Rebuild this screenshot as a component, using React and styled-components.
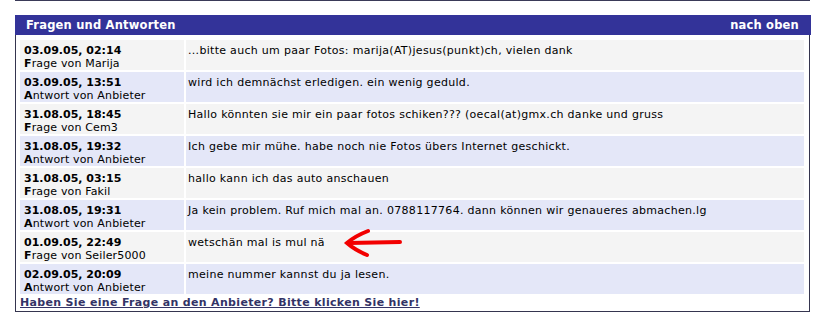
import React from "react";
import styled, { createGlobalStyle } from "styled-components";

const entries = [
  ["03.09.05, 02:14", "Frage von Marija", "...bitte auch um paar Fotos: marija(AT)jesus(punkt)ch, vielen dank"],
  ["03.09.05, 13:51", "Antwort von Anbieter", "wird ich demnächst erledigen. ein wenig geduld."],
  ["31.08.05, 18:45", "Frage von Cem3", "Hallo könnten sie mir ein paar fotos schiken??? (oecal(at)gmx.ch danke und gruss"],
  ["31.08.05, 19:32", "Antwort von Anbieter", "Ich gebe mir mühe. habe noch nie Fotos übers Internet geschickt."],
  ["31.08.05, 03:15", "Frage von Fakil", "hallo kann ich das auto anschauen"],
  ["31.08.05, 19:31", "Antwort von Anbieter", "Ja kein problem. Ruf mich mal an. 0788117764. dann können wir genaueres abmachen.lg"],
  ["01.09.05, 22:49", "Frage von Seiler5000", "wetschän mal is mul nä"],
  ["02.09.05, 20:09", "Antwort von Anbieter", "meine nummer kannst du ja lesen."],
];

const GlobalStyle = createGlobalStyle`
  body {
    margin: 0;
    background: #fff;
    font-family: "DejaVu Sans", Verdana, sans-serif;
    font-size: 11px;
    color: #000;
  }
`;

const Page = styled.div`
  position: relative;
  padding-left: 15px;
`;

const PrevEdge = styled.div`
  width: 795px;
  height: 1px;
  background: #3a3a58;
  margin-bottom: 14px;
`;

const Panel = styled.div`
  width: 796px;
`;

const Header = styled.div`
  height: 20px;
  background: #333399;
  color: #fff;
  font-weight: bold;
  font-size: 11.5px;
  letter-spacing: 0.2px;
  display: flex;
  align-items: center;
  justify-content: space-between;
  padding: 0 12px 0 11px;
`;

const Body = styled.div`
  width: 795px;
  box-sizing: border-box;
  border: 1px solid #35354f;
  border-top: none;
  padding: 5px 5px 1px 4px;
`;

const Grid = styled.div`
  display: grid;
  grid-template-columns: 164px 1fr;
  gap: 2px;
`;

const Cell = styled.div`
  height: 30px;
  box-sizing: border-box;
  padding: 4px 3px 0 ${(p) => (p.$msg ? "2px" : "4px")};
  line-height: 13px;
  letter-spacing: ${(p) => (p.$msg ? "0.3px" : "0.15px")};
  background: ${(p) => (p.$alt ? "#e4e7f8" : "#f4f4f4")};
`;

const Date = styled.div`
  font-weight: bold;
  letter-spacing: 0;
`;

const Initial = styled.b``;

const AskLink = styled.a`
  display: block;
  margin-top: 2px;
  line-height: 14px;
  font-weight: bold;
  letter-spacing: 0.33px;
  color: #333366;
  text-decoration: underline;
  cursor: pointer;
`;

const Arrow = styled.svg`
  position: absolute;
  left: 343px;
  top: 228px;
`;

export default function App() {
  return (
    <Page>
      <GlobalStyle />
      <PrevEdge />
      <Panel>
        <Header>
          <span>Fragen und Antworten</span>
          <span>nach oben</span>
        </Header>
        <Body>
          <Grid>
            {entries.map(([date, who, text], i) => (
              <React.Fragment key={i}>
                <Cell $alt={i % 2 === 1}>
                  <Date>{date}</Date>
                  <div>
                    <Initial>{who[0]}</Initial>
                    {who.slice(1)}
                  </div>
                </Cell>
                <Cell $alt={i % 2 === 1} $msg>
                  {text}
                </Cell>
              </React.Fragment>
            ))}
          </Grid>
          <AskLink>Haben Sie eine Frage an den Anbieter? Bitte klicken Sie hier!</AskLink>
        </Body>
      </Panel>
      <Arrow width="62" height="32" viewBox="0 0 62 32">
        <g fill="none" stroke="#f20000" strokeWidth="4" strokeLinecap="round">
          <path d="M6 15 L57 14" />
          <path d="M25 3 Q12 8 4 15 Q12 22 24 27" />
        </g>
      </Arrow>
    </Page>
  );
}
